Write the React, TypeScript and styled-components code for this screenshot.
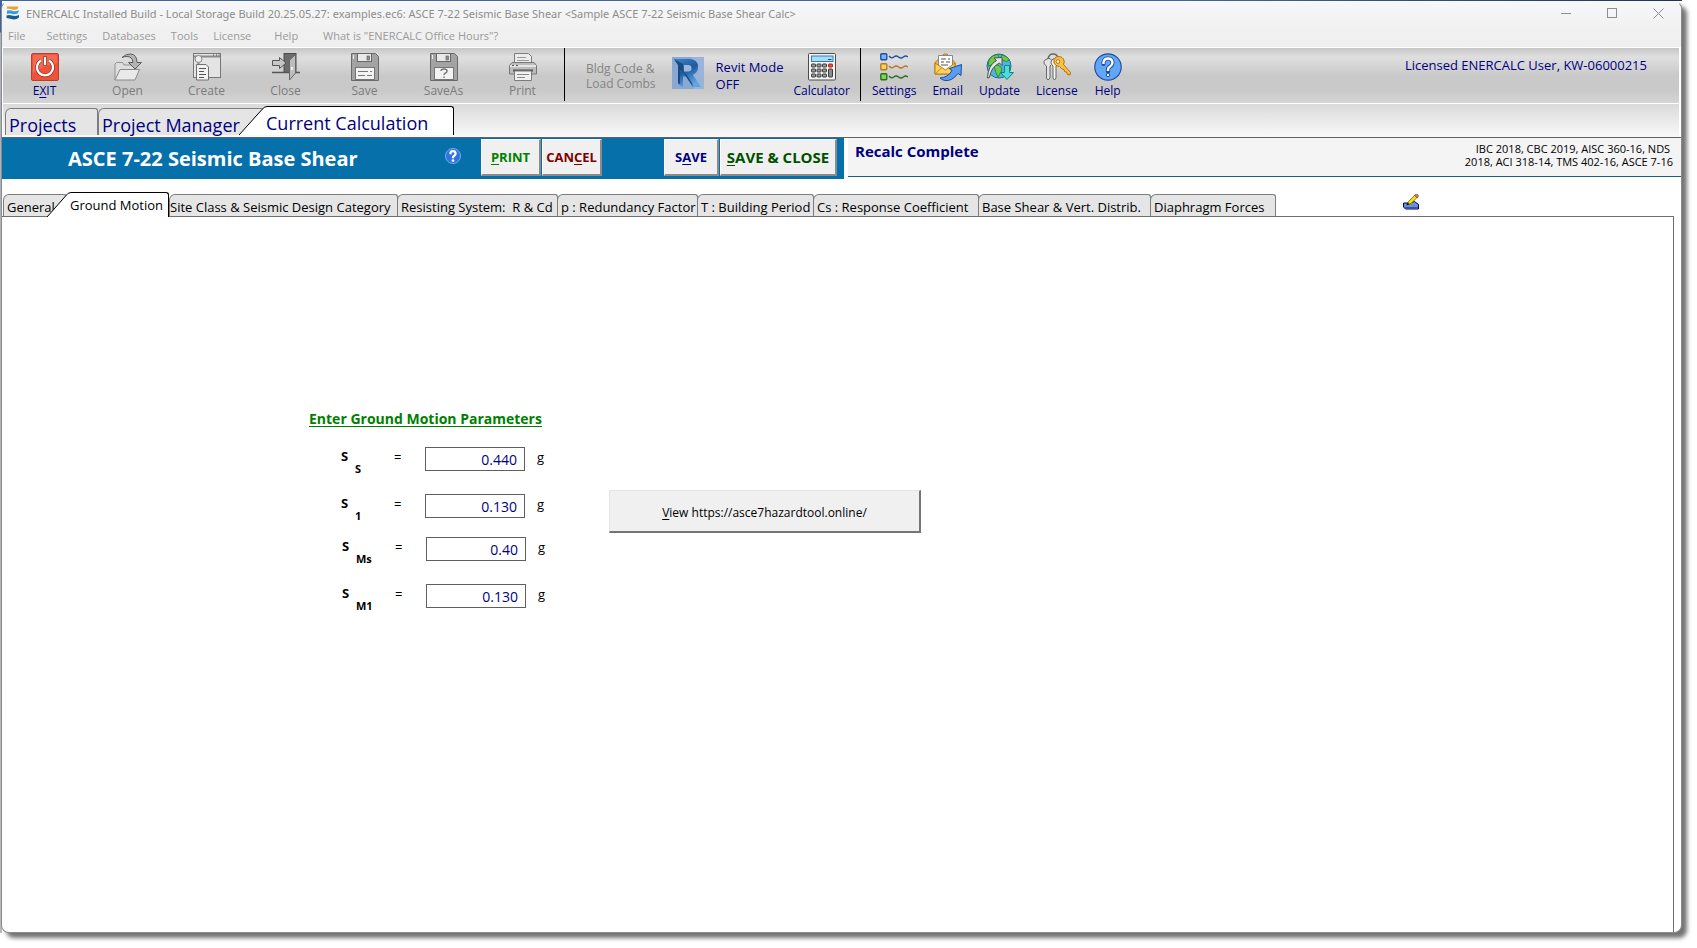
import React from 'react';
import styled, { createGlobalStyle, css } from 'styled-components';

const navy = '#000080';

const GlobalStyle = createGlobalStyle`
  * { box-sizing: border-box; }
  body { margin: 0; background: #fff; font-family: "Open Sans", "Noto Sans", sans-serif; }
  button, input { font: inherit; color: inherit; }
  button { padding: 0; border: 0; background: none; white-space: nowrap; }
  svg { display: block; flex: none; }
  u { text-underline-offset: 2px; }
`;

/* ---------- window frame ---------- */

const Desktop = styled.div`
  display: flex;
  min-height: 100vh;
  padding: 1px 15px 15px 1px;
  background:
    linear-gradient(90deg, #45659a 70%, #223454) 0 0 / calc(100% - 15px) 1px no-repeat,
    linear-gradient(#3a63a4 0, #3a63a4 32px, #aab2bc 33px, #b9b9b9 100%) 0 0 / 2px calc(100% - 15px) no-repeat,
    #fff;
`;

const Window = styled.main`
  flex: 1;
  min-width: 0;
  display: flex;
  flex-direction: column;
  background: #fff;
  border: 1px solid #8a8a8a;
  border-top-color: #f6f7f9;
  border-radius: 8px;
  overflow: hidden;
  box-shadow: 5px 5px 4px rgba(0, 0, 0, 0.55);
`;

const Chrome = styled.header`
  background: linear-gradient(#f6f7f9, #f1f1f1 60%, #efefef);
`;

const TitleBar = styled.div`
  display: flex;
  align-items: center;
  height: 22px;
  padding-left: 4px;
  color: #8d8d8d;
  font-family: "Noto Sans", "Open Sans", sans-serif;
  font-size: 11px;
`;

const WindowTitle = styled.h1`
  flex: 1;
  margin: 0 0 0 6px;
  font-size: 11px;
  font-weight: 400;
  white-space: nowrap;
`;

const WindowButton = styled.button`
  display: grid;
  place-items: center;
  width: 46px;
  height: 22px;
`;

const MenuBar = styled.nav`
  display: flex;
  gap: 15px;
  height: 23px;
  padding-left: 6px;
  color: #9a9a9a;
  font-size: 11px;
`;

const MenuItem = styled.button<{ $after: number }>`
  line-height: 24px;
  margin-right: ${p => p.$after}px;
`;

/* ---------- toolbar ---------- */

const Toolbar = styled.div`
  display: flex;
  height: 57px;
  margin: 0 2px 0 1px;
  border-top: 1px solid #fff;
  border-bottom: 1px solid #fff;
  background: linear-gradient(#c6c6c6 0, #dfdfdf 9px, #c9c9c9 28px, #c9c9c9 42px, #d5d5d5 100%);
  color: ${navy};
  font-size: 12px;
`;

const ToolGroup = styled.div<{ $gap?: number; $pad?: number }>`
  display: flex;
  align-items: flex-start;
  gap: ${p => p.$gap ?? 0}px;
  padding: 5px ${p => p.$pad ?? 0}px 0;
`;

const ToolButton = styled.button<{ $fixed?: boolean; $muted?: boolean }>`
  display: flex;
  flex-direction: column;
  align-items: center;
  gap: 2px;
  width: ${p => (p.$fixed ? '79px' : 'auto')};
  margin-right: ${p => (p.$fixed && !p.$muted ? '4px' : '0')};
  color: ${p => (p.$muted ? '#7b7b7b' : navy)};
  line-height: 16px;
`;

const Divider = styled.div`
  width: 1px;
  height: 53px;
  background: #000;
`;

const CodeButton = styled.button`
  margin: 8px 16px 0 21px;
  color: #858585;
  line-height: 15px;
  text-align: left;
`;

const RevitButton = styled.button`
  display: flex;
  align-items: flex-start;
  gap: 12px;
  margin-top: 4px;
  text-align: left;
  font-size: 13px;
  line-height: 17px;
`;

const RevitLabel = styled.span`
  padding-top: 2px;
`;

const Licensee = styled.div`
  margin-left: auto;
  padding: 9px 32px 0 0;
  font-size: 13px;
  line-height: 16px;
  white-space: nowrap;
`;

/* ---------- tabs ---------- */

const tabEdge = css`
  border: 1px solid #7d7d7d;
  border-bottom: 0;
  border-radius: 6px 3px 0 0;
  background: #e5e5e5;
`;

const AppTabs = styled.div`
  display: flex;
  align-items: flex-end;
  height: 33px;
  margin: 0 2px 0 1px;
  padding: 0 0 2px 2px;
  background: linear-gradient(#dadada, #f9f9f9);
  color: ${navy};
  font-size: 18px;
  line-height: 20px;
`;

const AppTab = styled.button<{ $w: number }>`
  ${tabEdge}
  width: ${p => p.$w}px;
  height: 27px;
  padding: 5px 0 0 3px;
  text-align: left;
`;

const PageTabs = styled.div`
  display: flex;
  align-items: flex-end;
  height: 37px;
  padding-left: 2px;
  font-size: 13px;
  line-height: 16px;
  color: #000;
`;

const PageTab = styled.button<{ $w: number; $tight?: boolean }>`
  ${tabEdge}
  width: ${p => p.$w}px;
  height: 22px;
  padding: 3px 0 0 ${p => (p.$tight ? 0 : 3)}px;
  margin-left: ${p => (p.$tight ? '0' : '-1px')};
  text-align: left;
`;

const activeSizes = {
  large: css`
    width: 215px;
    height: 29px;
    margin-left: -25px;
    padding-left: 27px;
    line-height: 34px;
  `,
  small: css`
    width: 122px;
    height: 25px;
    margin: 0 0 -1px -20px;
    padding-left: 23px;
    line-height: 27px;
  `,
};

const ActiveTabButton = styled.button<{ $size: 'large' | 'small' }>`
  position: relative;
  isolation: isolate;
  text-align: left;
  ${p => activeSizes[p.$size]}

  &::before {
    content: '';
    position: absolute;
    z-index: -1;
    inset: 0 0 0 ${p => (p.$size === 'large' ? 29 : 25)}px;
    background: #fff;
    border: solid #000;
    border-width: 1px 1px 0 0;
    border-radius: 0 3px 0 0;
  }

  svg {
    position: absolute;
    z-index: -1;
    left: 0;
    top: 0;
  }
`;

const ActiveTab = ({ size, children }: { size: 'large' | 'small'; children: React.ReactNode }) => {
  const w = size === 'large' ? 29 : 25;
  const h = size === 'large' ? 29 : 25;
  return (
    <ActiveTabButton $size={size} role="tab" aria-selected>
      <svg width={w} height={h} aria-hidden>
        <path d={`M${w} 0H${w - 2}L0 ${h}H${w}Z`} fill="#fff" />
        <path d={`M${w} .5H${w - 1}Q${w - 4} .5 ${w - 6} 3.500L0 ${h}`} fill="none" stroke="#000" />
      </svg>
      {children}
    </ActiveTabButton>
  );
};

const EditButton = styled.button`
  align-self: flex-end;
  margin: 0 0 6px 127px;
`;

/* ---------- calculation header ---------- */

const CalcHeader = styled.section`
  display: flex;
  gap: 4px;
  height: 42px;
  border-top: 1px solid #5d6366;
`;

const CalcBanner = styled.div`
  display: flex;
  align-items: flex-start;
  padding: 1px 7px 0 66px;
  background: #0670ab;
`;

const CalcTitle = styled.h2`
  width: 377px;
  margin: 0;
  color: #fff;
  font-size: 20px;
  font-weight: 700;
  line-height: 39px;
`;

const HelpButton = styled.button`
  margin: 9px 20px 0 0;
`;

const ActionButton = styled.button<{ $color: string; $w: number; $large?: boolean; $gapAfter?: number }>`
  width: ${p => p.$w}px;
  height: 37px;
  margin-right: ${p => p.$gapAfter ?? 1}px;
  background: #f0f0f0;
  border: solid;
  border-width: 1px 2px 2px 1px;
  border-color: #fff #8b8b8b #8b8b8b #fff;
  color: ${p => p.$color};
  font-size: ${p => (p.$large ? 15 : 13)}px;
  font-weight: 700;
`;

const Status = styled.div`
  flex: 1;
  display: flex;
  justify-content: space-between;
  height: 39px;
  padding: 0 8px 0 7px;
  background: #f4f4f4;
  border-bottom: 1px solid #1d5c86;
`;

const Recalc = styled.output`
  color: ${navy};
  font-size: 15px;
  font-weight: 700;
  line-height: 26px;
`;

const Codes = styled.p`
  margin: 4px 0 0;
  color: #000;
  font-size: 11px;
  line-height: 13px;
  text-align: right;
  white-space: pre;
`;

/* ---------- ground motion page ---------- */

const Panel = styled.section`
  flex: 1;
  display: flex;
  align-items: flex-start;
  margin-right: 7px;
  padding: 192px 20px 20px 307px;
  border-top: 1px solid #6f6f6f;
  border-right: 1px solid #6f6f6f;
`;

const Form = styled.form`
  width: 300px;
`;

const FormTitle = styled.h3`
  margin: 0 0 18px;
  color: #008000;
  font-size: 14px;
  font-weight: 700;
  line-height: 20px;
  text-decoration: underline;
  text-underline-offset: 2px;
  white-space: nowrap;
`;

const FieldGroup = styled.div<{ $second?: boolean }>`
  display: grid;
  row-gap: 23px;
  padding-left: ${p => (p.$second ? 33 : 32)}px;
  margin-top: ${p => (p.$second ? '19px' : '0')};
`;

const Field = styled.div`
  display: grid;
  grid-template-columns: 53px 31px 100px auto;
  align-items: start;
  height: 24px;
  color: #000;
  font-size: 13px;
  line-height: 20px;
`;

const Symbol = styled.label`
  display: grid;
  grid-template-columns: 14px auto;
  height: 24px;
  font-weight: 700;
  line-height: 18px;
`;

const Subscript = styled.span`
  padding-top: 13px;
  font-size: 11px;
`;

const ValueBox = styled.input`
  width: 100px;
  height: 24px;
  padding: 0 7px 0 2px;
  border: 1px solid #5f5f5f;
  border-radius: 0;
  background: #fff;
  color: ${navy};
  font-size: 14px;
  text-align: right;
`;

const Unit = styled.span`
  padding-left: 12px;
`;

const LinkButton = styled.button`
  width: 312px;
  height: 43px;
  margin-top: 81px;
  padding-top: 2px;
  background: #f0f0f0;
  border: solid;
  border-width: 1px 2px 2px 1px;
  border-color: #e3e3e3 #757575 #757575 #e3e3e3;
  color: #000;
  font-size: 12px;
`;

/* ---------- drawings ---------- */

const Icon = ({ children, size = 28, box = 28 }: { children: React.ReactNode; size?: number; box?: number }) => (
  <svg width={size} height={size} viewBox={`0 0 ${box} ${box}`} fill="none" aria-hidden>
    {children}
  </svg>
);

const LogoIcon = () => (
  <Icon size={14} box={14}>
    <path d="M1 .5h11.500l-1 2.500Q8 4.500 6 3.500T1 3Z" fill="#f0a030" />
    <path d="M1 4.500q4-.5 6 .5t6-.8l-1 3q-3 1.800-5.500.8T1 8Z" fill="#2fa0dc" />
    <path d="M.5 9.500Q3 8.500 6 9.500t7-.5v2.500q-3 2.500-6.500 1.800T.5 12Z" fill="#1a5a90" />
  </Icon>
);

const ExitIcon = () => (
  <Icon>
    <rect x=".5" y=".5" width="27" height="27" rx="1.500" fill="#ee5238" stroke="#b8402c" />
    <path d="M2 2h24v8Q14 12 2 20Z" fill="#f77a62" opacity=".6" />
    <path d="M10 7.500a8 8 0 1 0 8 0" stroke="#7e2517" strokeWidth="3.400" />
    <path d="M14 3.500v9" stroke="#7e2517" strokeWidth="4" />
    <path d="M10 7.500a8 8 0 1 0 8 0" stroke="#fff" strokeWidth="2.200" />
    <path d="M14 4v8" stroke="#fff" strokeWidth="2.400" />
  </Icon>
);

const OpenIcon = () => (
  <Icon>
    <path d="M1 27V11l1.500-1.500h6L10 12h12v5" fill="#dedede" stroke="#929292" />
    <path d="M1 27 6 16.500h19.500L21 27Z" fill="#e9e9e9" stroke="#8a8a8a" />
    <path d="M8 4.500Q12 .5 17 1q6 .8 6 8.500h4.500L21 16l-6.500-6.500H19Q18.500 3.500 13 3.500q-3 0-5 1Z" fill="#b4b4b4" stroke="#5c5c5c" />
  </Icon>
);

const CreateIcon = () => (
  <Icon>
    <rect x=".5" y=".5" width="27" height="24" fill="#e4e4e4" stroke="#777" />
    <path d="M1 3.500h26" stroke="#8a8a8a" strokeWidth="2" />
    <path d="M20 2h1m2 0h1m1.500 0h1" stroke="#444" />
    <circle cx="5.500" cy="6" r="3.500" fill="#eee" stroke="#888" />
    <path d="M5.500 9.500V13" stroke="#888" strokeWidth="2" />
    <path d="M3.500 11.500h9.500l2.500 2.500v13h-12Z" fill="#f3f3f3" stroke="#707070" />
    <path d="M6 15.500h7M6 18.500h5M6 21.500h7M6 24.500h5" stroke="#555" />
  </Icon>
);

const CloseIcon = () => (
  <Icon>
    <rect x="12" y=".5" width="12" height="19" fill="#6c6c6c" stroke="#4c4c4c" />
    <path d="M0 19.500h28" stroke="#555" strokeWidth="1.500" />
    <path d="m17.500 7 6-5.500V20l-6 7Z" fill="#bdbdbd" stroke="#666" />
    <path d="M20 14v3" stroke="#fff" strokeWidth="1.500" />
    <path d="M.5 7.500h7v-3L14 10l-6.500 5.500v-3h-7Z" fill="#c7c7c7" stroke="#555" />
  </Icon>
);

const FloppyIcon = ({ question }: { question?: boolean }) => (
  <Icon>
    <path d="M.5.5h24l3 3v24H.5Z" fill="#a3a3a3" stroke="#6a6a6a" />
    <rect x="6.500" y=".5" width="14" height="8" fill="#e9e9e9" stroke="#666" />
    <rect x="16" y="3" width="2.500" height="4" fill="#8a8a8a" stroke="#666" strokeWidth=".7" />
    <path d="M2.500 2v4" stroke="#eee" />
    <rect x="4.500" y="14.500" width="19" height="12" fill="#f2f2f2" stroke="#757575" />
    {question ? (
      <path d="M11 18q0-2 3-2t3 2q0 1.500-2 2.300-1 .5-1 1.700M14 23.500v1.500" stroke="#777" strokeWidth="1.500" />
    ) : (
      <path d="M7 18.500h10m2 0h2M7 22.500h7m2 0h5" stroke="#777" />
    )}
  </Icon>
);

const PrintIcon = () => (
  <Icon>
    <path d="M5.500 11V.5h14l3 3V11" fill="#ececec" stroke="#7b7b7b" />
    <path d="M8 4.500h9M8 7.500h12" stroke="#999" />
    <path d="M3 9.500h22l2.500 3v8.500H.5v-8.500Z" fill="#bcbcbc" stroke="#777" />
    <path d="M1 13h26" stroke="#e5e5e5" strokeWidth="2" />
    <path d="M3 12.500h2m2 0h2" stroke="#555" />
    <path d="M4 17.500h20" stroke="#555" strokeWidth="2" />
    <path d="M5.500 18h17v9.500h-17Z" fill="#f0f0f0" stroke="#7b7b7b" />
    <path d="M8 21.500h12M8 24.500h8" stroke="#888" />
  </Icon>
);

const RevitIcon = () => (
  <Icon size={32} box={32}>
    <defs>
      <linearGradient id="revit" x1="0" y1="0" x2=".5" y2="1">
        <stop offset="0" stopColor="#3f86cc" />
        <stop offset=".5" stopColor="#1c5aa0" />
        <stop offset="1" stopColor="#5ea6e2" />
      </linearGradient>
    </defs>
    <path d="M0 0h32v32H0Z" fill="#8ba8d2" />
    <path d="M20 0h12v32H22Z" fill="#9ab4d9" />
    <path d="M2 2h15q9 0 9 8 0 5.500-5 8l8 12h-8l-7-10.500h-3V30l-5-3V8Z" fill="url(#revit)" />
    <path d="M12 8h4q3.500 0 3.500 3.200T16 14.500h-4Z" fill="#9cb7dc" />
    <path d="m2 2 9 5v8l-3-2v14l-2-1V8Z" fill="#1a4b80" />
    <path d="m11 15 3 4.500L21 30l-1-4-6-9Z" fill="#164b88" />
  </Icon>
);

const CalculatorIcon = () => (
  <Icon>
    <rect x=".5" y=".5" width="27" height="26.500" rx="1" fill="#f4f4f4" stroke="#4c4c4c" />
    <rect x="3.500" y="3" width="21.500" height="5.500" fill="#a8dcfa" stroke="#2b7cc0" />
    <path d="M20 6.500h3.500" stroke="#1b4e86" />
    {[11, 16, 21].map(y =>
      [3.5, 9, 14.5, 20.5].map(x =>
        x > 20 && y > 11 ? null : (
          <rect key={`${x}-${y}`} x={x} y={y} width="4" height="3" rx=".5" fill={x > 20 ? '#f04a38' : '#9c9c9c'} stroke={x > 20 ? '#a72a1c' : '#3a3a3a'} />
        ),
      ),
    )}
    <rect x="20.500" y="16" width="4" height="8" rx=".5" fill="#8c8c8c" stroke="#3a3a3a" />
  </Icon>
);

const settingRows = [
  { y: 0, fill: '#7fb2fb', stroke: '#1f4fa0' },
  { y: 10, fill: '#fdd05c', stroke: '#b87824' },
  { y: 20, fill: '#7cd45a', stroke: '#2c6e1e' },
];

const SettingsIcon = () => (
  <Icon>
    {settingRows.map(r => (
      <g key={r.y} stroke={r.stroke}>
        <rect x=".8" y={r.y + 0.8} width="6" height="6" rx="1" fill={r.fill} strokeWidth="1.400" />
        <path d={`M9 ${r.y + 3}q2.400 3 4.800 1t4.800 0 4.800 0 4.600 0`} strokeWidth="1.300" />
      </g>
    ))}
  </Icon>
);

const EmailIcon = () => (
  <Icon>
    <path d="M1 9.500 10 1h3l8 8.500V21H1Z" fill="#f5b83c" stroke="#b97a1d" />
    <path d="M4.500 2.500h14v12l-7 4-7-4Z" fill="#fff" stroke="#888" />
    <path d="M7 6h5m2 0h2M7 9h3m2 0h4M7 12h7" stroke="#555" />
    <path d="M1 10v11h20V10l-9.500 7Z" fill="#fbd25c" stroke="#b97a1d" />
    <path d="m1 21 7-6.500m13 6.500-7-6.500" stroke="#c88a28" />
    <path d="M6 25q8-.5 12-7.500l-2.500-2 12-4-.5 11-3-2Q18 28.500 11 27.500q-3-.5-5-2.500Z" fill="#5b9bf0" stroke="#1c4f9c" />
  </Icon>
);

const UpdateIcon = () => (
  <Icon>
    <circle cx="13" cy="13" r="12" fill="#4eb4e4" stroke="#1c6e96" />
    <path d="M3 7q3-5 9-5.500l1 3-3 1v3L6 12l-4 1ZM16 2q5 1 7.500 5l-3 1.500-4-1.500-2-2Z" fill="#6ccb4a" stroke="#297a2c" strokeWidth=".8" />
    <path d="m8 13 4-1 4 3-1 4-3 5-2-4Z" fill="#6ccb4a" stroke="#297a2c" strokeWidth=".8" />
    <path d="M1.500 25Q2 12 10.500 7.500L8 5l8-.5v8l-2.500-2.500Q5 14 3.500 24.500Z" fill="#e4e4e4" stroke="#505050" />
    <path d="M18.500 12.500h5v7h4L21 26.500l-6.500-7h4Z" fill="#4fdcd6" stroke="#0d8684" />
  </Icon>
);

const KeysIcon = () => (
  <Icon>
    <path d="M5 6Q6 .5 10.500 1T16 7" stroke="#666" strokeWidth="1.500" />
    <path d="M4 6q4-2 5 3 0 3-2 4v12l-2 2-1.500-2V13Q0 11 1 8.500 2 6.500 4 6Z" fill="#e4e4e4" stroke="#666" />
    <path d="M10 6q4-1.500 5 3 0 3-2 4v12l-1.500 2-1.500-2V13q-2.500-2-2-4 .5-2 2-3Z" fill="#f4f4f4" stroke="#666" />
    <path d="M13 4q5-1.500 7.500 2 1.500 3 0 5.500l7 8-.5 2.500-2.500-.5-1-2.500-2-.5-.5-2-2-.5-2.500-2.500q-4 0-5.500-3.500Q10 6 13 4Z" fill="#fcc03e" stroke="#ad711a" />
    <circle cx="15" cy="8.500" r="1.800" fill="#fff" stroke="#ad711a" />
  </Icon>
);

const HelpIcon = ({ size = 28 }: { size?: number }) => (
  <Icon size={size}>
    <circle cx="14" cy="14" r="13.200" fill={size < 20 ? '#2f75e0' : '#62a6f8'} stroke={size < 20 ? '#7db0f0' : '#1e4f9e'} strokeWidth={size < 20 ? 1.6 : 1.2} />
    {size >= 20 && <path d="M9.500 11V9.500q.5-4 4.500-4t4.500 4q0 2.500-2.500 4-2 1-2 3.500v1.500" stroke="#1e4f9e" strokeWidth="4.200" strokeLinecap="round" />}
    <path d="M9.500 11V9.500q.5-4 4.500-4t4.500 4q0 2.500-2.500 4-2 1-2 3.500v1" stroke="#fff" strokeWidth={size < 20 ? 4 : 2.4} />
    <circle cx="14" cy="22" r={size < 20 ? 2.4 : 1.7} fill="#fff" stroke={size < 20 ? 'none' : '#1e4f9e'} />
  </Icon>
);

const EditIcon = () => (
  <Icon size={16} box={16}>
    <path d="M.5 9h5l6-1.500 4 3V15h-13l-2-2Z" fill="#6c8fd6" stroke="#000060" />
    <path d="M2 13h13v2H3Z" fill="#3a4fa8" />
    <path d="m4.500 10.500 1-3L12 1l2.500 2-6.500 6.500Z" fill="#fbe500" stroke="#66600c" strokeWidth=".8" />
    <path d="m11.500 1.500 1-1.300h1.800l.9 1v1.500l-1 1Z" fill="#e07a62" stroke="#5d3020" strokeWidth=".6" />
    <path d="m3.500 11.500 1-3 2 1.800Z" fill="#111" />
  </Icon>
);

/* ---------- page ---------- */

const menus = [
  { label: 'File', after: 6 },
  { label: 'Settings', after: 0 },
  { label: 'Databases', after: 0 },
  { label: 'Tools', after: 0 },
  { label: 'License', after: 8 },
  { label: 'Help', after: 10 },
  { label: 'What is "ENERCALC Office Hours"?', after: 0 },
];

const fileTools = [
  { label: 'Open', icon: <OpenIcon /> },
  { label: 'Create', icon: <CreateIcon /> },
  { label: 'Close', icon: <CloseIcon /> },
  { label: 'Save', icon: <FloppyIcon /> },
  { label: 'SaveAs', icon: <FloppyIcon question /> },
  { label: 'Print', icon: <PrintIcon /> },
];

const serviceTools = [
  { label: 'Settings', icon: <SettingsIcon /> },
  { label: 'Email', icon: <EmailIcon /> },
  { label: 'Update', icon: <UpdateIcon /> },
  { label: 'License', icon: <KeysIcon /> },
  { label: 'Help', icon: <HelpIcon /> },
];

const pageTabs = [
  { label: 'Resisting System:  R & Cd', width: 161 },
  { label: 'p : Redundancy Factor', width: 141 },
  { label: 'T : Building Period', width: 117 },
  { label: 'Cs : Response Coefficient', width: 166 },
  { label: 'Base Shear & Vert. Distrib.', width: 173 },
  { label: 'Diaphragm Forces', width: 126 },
];

const fieldGroups = [
  [
    { sub: 'S', value: '0.440' },
    { sub: '1', value: '0.130' },
  ],
  [
    { sub: 'Ms', value: '0.40' },
    { sub: 'M1', value: '0.130' },
  ],
];

const PreText = styled.span`
  white-space: pre;
`;

export default function App() {
  return (
    <>
      <GlobalStyle />
      <Desktop>
        <Window>
          <Chrome>
            <TitleBar>
              <LogoIcon />
              <WindowTitle>
                {'ENERCALC Installed Build - Local Storage Build 20.25.05.27: examples.ec6: ASCE 7-22 Seismic Base Shear <Sample ASCE 7-22 Seismic Base Shear Calc>'}
              </WindowTitle>
              <WindowButton aria-label="Minimize">
                <Icon size={11} box={11}><path d="M0 5.500h10" stroke="#8d8d8d" /></Icon>
              </WindowButton>
              <WindowButton aria-label="Maximize">
                <Icon size={11} box={11}><rect x=".5" y=".5" width="9" height="9" stroke="#8d8d8d" /></Icon>
              </WindowButton>
              <WindowButton aria-label="Close window">
                <Icon size={11} box={11}><path d="m.5.5 10 10m0-10-10 10" stroke="#8d8d8d" /></Icon>
              </WindowButton>
            </TitleBar>
            <MenuBar>
              {menus.map(m => (
                <MenuItem key={m.label} $after={m.after}>{m.label}</MenuItem>
              ))}
            </MenuBar>
          </Chrome>

          <Toolbar>
            <ToolGroup $pad={2}>
              <ToolButton $fixed>
                <ExitIcon />
                <span>E<u>X</u>IT</span>
              </ToolButton>
              {fileTools.map(t => (
                <ToolButton key={t.label} $fixed $muted>
                  {t.icon}
                  <span>{t.label}</span>
                </ToolButton>
              ))}
            </ToolGroup>
            <Divider />
            <ToolGroup>
              <CodeButton>Bldg Code &amp;<br />Load Combs</CodeButton>
              <RevitButton>
                <RevitIcon />
                <RevitLabel>Revit Mode<br />OFF</RevitLabel>
              </RevitButton>
            </ToolGroup>
            <ToolGroup $pad={10}>
              <ToolButton>
                <CalculatorIcon />
                <span>Calculator</span>
              </ToolButton>
            </ToolGroup>
            <Divider />
            <ToolGroup $gap={16} $pad={11}>
              {serviceTools.map(t => (
                <ToolButton key={t.label}>
                  {t.icon}
                  <span>{t.label}</span>
                </ToolButton>
              ))}
            </ToolGroup>
            <Licensee>Licensed ENERCALC User, KW-06000215</Licensee>
          </Toolbar>

          <AppTabs role="tablist" aria-label="Application">
            <AppTab $w={93} role="tab">Projects</AppTab>
            <AppTab $w={166} role="tab">Project Manager</AppTab>
            <ActiveTab size="large">Current Calculation</ActiveTab>
          </AppTabs>

          <CalcHeader>
            <CalcBanner>
              <CalcTitle>ASCE 7-22 Seismic Base Shear</CalcTitle>
              <HelpButton aria-label="Help on this calculation">
                <HelpIcon size={16} />
              </HelpButton>
              <ActionButton $color="#008000" $w={60}><u>P</u>RINT</ActionButton>
              <ActionButton $color="#800000" $w={60} $gapAfter={62}>CAN<u>C</u>EL</ActionButton>
              <ActionButton $color={navy} $w={55}>S<u>A</u>VE</ActionButton>
              <ActionButton $color="#005000" $w={117} $large $gapAfter={0}><u>S</u>AVE &amp; CLOSE</ActionButton>
            </CalcBanner>
            <Status>
              <Recalc>Recalc Complete</Recalc>
              <Codes>{'IBC 2018, CBC 2019, AISC 360-16, NDS\u00a0\n2018, ACI 318-14, TMS 402-16, ASCE 7-16'}</Codes>
            </Status>
          </CalcHeader>

          <PageTabs role="tablist" aria-label="Calculation pages">
            <PageTab $w={64} role="tab">General</PageTab>
            <ActiveTab size="small">Ground Motion</ActiveTab>
            <PageTab $w={229} $tight role="tab">Site Class &amp; Seismic Design Category</PageTab>
            {pageTabs.map(t => (
              <PageTab key={t.label} $w={t.width} role="tab"><PreText>{t.label}</PreText></PageTab>
            ))}
            <EditButton aria-label="Edit notes"><EditIcon /></EditButton>
          </PageTabs>

          <Panel role="tabpanel">
            <Form>
              <FormTitle>Enter Ground Motion Parameters</FormTitle>
              {fieldGroups.map((group, i) => (
                <FieldGroup key={i} $second={i === 1}>
                  {group.map(f => (
                    <Field key={f.sub}>
                      <Symbol htmlFor={`s-${f.sub}`}>
                        <span>S</span>
                        <Subscript>{f.sub}</Subscript>
                      </Symbol>
                      <span>=</span>
                      <ValueBox id={`s-${f.sub}`} defaultValue={f.value} />
                      <Unit>g</Unit>
                    </Field>
                  ))}
                </FieldGroup>
              ))}
            </Form>
            <LinkButton><u>V</u>iew https://asce7hazardtool.online/</LinkButton>
          </Panel>
        </Window>
      </Desktop>
    </>
  );
}
